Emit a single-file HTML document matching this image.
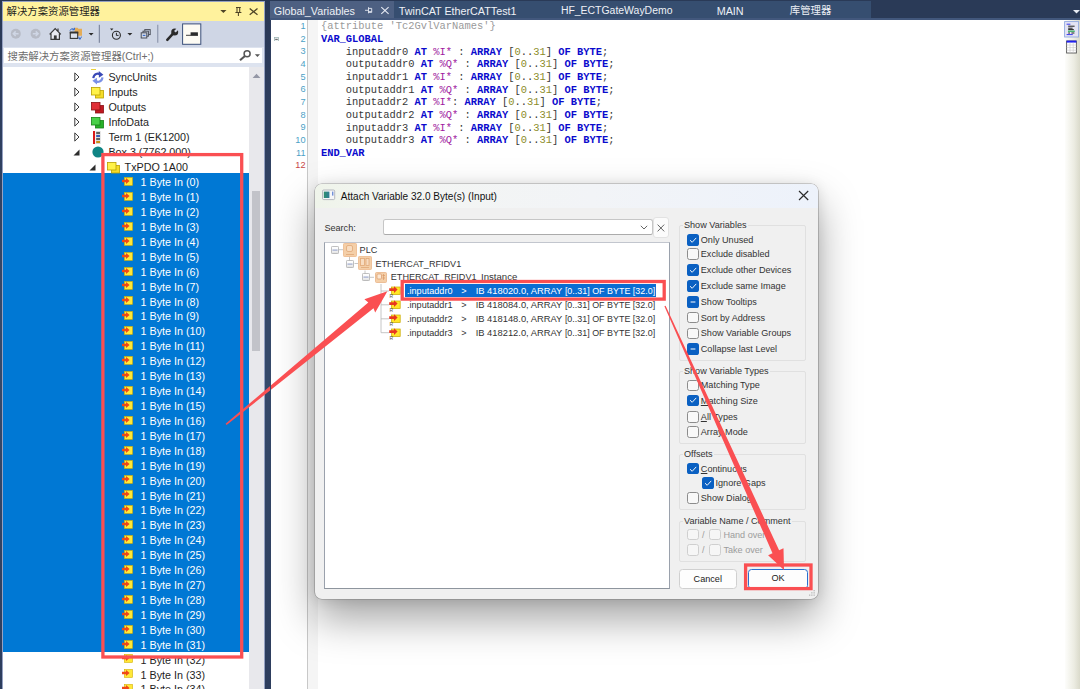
<!DOCTYPE html>
<html lang="zh"><head><meta charset="utf-8"><title>TwinCAT Attach Variable</title>
<style>
html,body{margin:0;padding:0}
body{width:1080px;height:689px;overflow:hidden;position:relative;background:linear-gradient(180deg,#283754 0%,#2C3B5B 10%,#35496A 45%,#35496A 55%,#2D3D5D 100%);font-family:"Liberation Sans","Noto Sans CJK SC",sans-serif;}
.abs{position:absolute}
#left{position:absolute;left:3px;top:2px;width:260.6px;height:687px;background:#fff;overflow:hidden}
#ltitle{position:absolute;left:0;top:0;width:262px;height:19px;background:#FFF29D}
#ltitle .t{position:absolute;left:3.5px;top:2px;font-size:10.4px;line-height:15px;color:#1E1E1E;white-space:nowrap}
#ltool{position:absolute;left:0;top:19px;width:262px;height:26px;background:#CFD6E5}
#lsearch{position:absolute;left:0;top:45px;width:262px;height:19.8px;background:#DDE3EF}
#lsearch .box{position:absolute;left:1px;top:1px;width:257.6px;height:15.3px;background:#fff}
#lsearch .t{position:absolute;left:4.5px;top:2px;font-size:10.4px;line-height:15px;color:#6D6D6D;white-space:nowrap}
#ltree{position:absolute;left:-3px;top:-2px;width:252px;height:689px;}
#selbg{position:absolute;left:3px;top:173.3px;width:246px;height:478.7px;background:#0078D4}
.tt{position:absolute;font-size:10.75px;line-height:14.9px;height:14.9px;color:#1E1E1E;white-space:nowrap}
.tt.sel{color:#fff}
#lscroll{position:absolute;left:246px;top:64.8px;width:14.6px;height:623px;background:#E8E8EC}
#lscroll .th{position:absolute;left:3px;top:124.2px;width:8px;height:160px;background:#C2C3C9}
#edge{position:absolute;left:270px;top:20px;width:0.7px;height:669px;background:linear-gradient(180deg,#2D3C5C 0%,#35496A 43%,#35496A 53%,#2D3D5D 100%);z-index:3}
#tabs{position:absolute;left:270px;top:0;width:810px;height:20px;background:#2A3A57}
#tabs .strip{position:absolute;left:0;top:0.8px;width:601px;height:17.7px;background:#364E70}
#tabs .act{position:absolute;left:0;top:0.8px;width:124px;height:19.2px;background:#4D6082}
#tabs .line{position:absolute;left:0;top:18.3px;width:810px;height:1.7px;background:#42577C}
#tabs .tx{position:absolute;top:3.7px;font-size:10.75px;line-height:14px;color:#EEF1F6;white-space:nowrap}
#ed{position:absolute;left:270px;top:20px;width:810px;height:669px;background:#fff;overflow:hidden}
#gut{position:absolute;left:37px;top:0;width:9.6px;height:669px;background:#F5F5F5;border-left:1px solid #C8C8C8}
#rstrip{position:absolute;left:794.5px;top:0;width:15.5px;height:669px;background:linear-gradient(90deg,#FDFDFB 0%,#ECECE2 60%,#DADACB 100%)}
.ln{position:absolute;left:270px;width:35.5px;text-align:right;font-size:9.2px;line-height:12.66px;margin-top:-0.5px;color:#4C9FC6;font-family:"Liberation Sans",sans-serif}
.ln.red{color:#C84646}
.cl{position:absolute;left:320.9px;margin:0;font-family:"Liberation Mono",monospace;font-size:10.42px;line-height:12.66px;color:#383838;white-space:pre}
.cl .k{color:#0A0ACD;font-weight:bold}
.cl .g{color:#9A9A9A}
.cl .p{color:#A01CA0}
.cl .n{color:#8C8C28}
#dlg{position:absolute;left:315px;top:184px;width:503px;height:414.5px;background:#F0F0F0;border-radius:7px;box-shadow:0 0 0 0.6px rgba(90,90,90,.5),0 20px 42px rgba(0,0,0,.36),0 1px 13px rgba(0,0,0,.11)}
#dtitle{position:absolute;left:0;top:0;width:503px;height:24px;border-radius:7px 7px 0 0;background:linear-gradient(90deg,#EFF4EA 0%,#F3F5F2 15%,#F2F4F7 55%,#EDF2FB 100%)}
#dlgc{position:absolute;left:-315px;top:-184px;width:1080px;height:689px;font-family:"Liberation Sans",sans-serif}
.dl{position:absolute;font-size:9.1px;line-height:12px;color:#333;white-space:nowrap}
.dl.gray{color:#9C9C9C}
.gl{position:absolute;font-size:9.1px;line-height:12px;color:#333;white-space:nowrap;background:#F0F0F0;padding:0 1.5px}
.grp{position:absolute;border:0.8px solid #E0E0E0;box-sizing:border-box;border-radius:2px}
.cb{position:absolute;width:11.6px;height:11.6px;box-sizing:border-box;border:0.85px solid #8C8C8C;border-radius:2.6px;background:#F8F8F8;line-height:0;overflow:hidden}
.cb.on{border:0;background:#0A60C2}
.cb.on svg{position:absolute;left:-0.2px;top:-0.2px}
.cb.dis{border-color:#CFCFCF;background:#F6F6F6}
.dtx{position:absolute;font-size:9.1px;line-height:12px;color:#333;white-space:nowrap}
.dtx.w{color:#fff}
.btn{position:absolute;box-sizing:border-box;height:20px;border-radius:3.5px;background:#FDFDFD;border:0.8px solid #D0D0D0;font-size:9.1px;line-height:18.6px;text-align:center;color:#1a1a1a}
</style></head><body>

<div class="abs" style="left:1.9px;top:1px;width:263.1px;height:688px;background:#95A1C2"></div>
<div id="left">
  <div id="ltitle"><span class="t">解决方案资源管理器</span>
    <svg class="abs" style="left:217px;top:0" width="44" height="19" viewBox="220 2 44 19"><path d="M220.3 9.9 H226.5 L223.4 13 Z" fill="#4E4426"/><path d="M236 7.4 H240.8 M237 7.4 V12.4 M239.7 7.4 V12.4 M235.4 12.5 H241.4 M238.4 12.5 V16" stroke="#4E4426" stroke-width="1.05" fill="none"/><path d="M249.7 8.5 L257.5 14.8 M257.5 8.5 L249.7 14.8" stroke="#4E4426" stroke-width="1.3" fill="none"/></svg>
  </div>
  <div id="ltool">
    <svg class="abs" style="left:-3px;top:0" width="264" height="26" viewBox="0 21 264 26">
      <circle cx="15.8" cy="33.7" r="5" fill="#B7BBC6"/><circle cx="35.6" cy="33.7" r="5" fill="#B7BBC6"/>
      <path d="M18.6 33.7 H13.6 M15.7 31.4 L13.3 33.7 L15.7 36" stroke="#CFD6E5" stroke-width="1.5" fill="none"/>
      <path d="M32.8 33.7 H37.8 M35.7 31.4 L38.1 33.7 L35.7 36" stroke="#CFD6E5" stroke-width="1.5" fill="none"/>
      <path d="M51 33.6 L55.2 29.4 L59.4 33.6 V39.4 H51 Z" fill="#E9EAF1"/><path d="M49.6 34.4 L55.2 28.6 L60.8 34.4 M51 33.4 V39.4 H59.4 V33.4 M58 28.4 V31.2" stroke="#3A3A3A" stroke-width="1.2" fill="none"/><rect x="53.9" y="35.4" width="2.8" height="4" fill="#3A3A3A"/>
      <path d="M74.6 27.8 H77.6 L78.4 28.8 H82 V35.8 H74.6 Z" fill="#E4AC58"/><rect x="70.3" y="32.4" width="7.4" height="6" fill="#DCE2EE" stroke="#333" stroke-width="1.1"/><rect x="69.8" y="31.6" width="8.4" height="1.9" fill="#333"/>
      <path d="M70 30.6 C70.5 28.6 73 28.4 74 29.4 M74.4 27.8 V29.8 H72.4" stroke="#2A62C8" stroke-width="1" fill="none"/><path d="M81.4 36.6 C81 38.6 79.6 39 79 38.6 M79 36.8 V38.8 H81" stroke="#2A62C8" stroke-width="1" fill="none"/>
      <path d="M88.6 33 H93.6 L91.1 35.6 Z" fill="#2B2B2B"/>
      <path d="M99.3 24.8 V42.8" stroke="#6E7891" stroke-width="1"/>
      <path d="M110 28.4 H113.4 L111.7 30.4 Z" fill="#2B2B2B"/><circle cx="116.4" cy="35.2" r="4" fill="none" stroke="#2B2B2B" stroke-width="1.1"/><path d="M116.4 32.8 V35.4 H118.6" stroke="#2B2B2B" stroke-width="1" fill="none"/>
      <path d="M127.4 33 H132.4 L129.9 35.6 Z" fill="#2B2B2B"/>
      <g fill="#CFD6E5" stroke="#4A4F5A" stroke-width="1"><rect x="144.8" y="29.6" width="5.4" height="5"/><rect x="143" y="31.2" width="5.4" height="5"/><rect x="141.2" y="32.8" width="5.6" height="5.2"/></g><path d="M142.8 35.4 H145.4" stroke="#2A62C8" stroke-width="1"/>
      <path d="M157.7 24.8 V42.8" stroke="#98A1B6" stroke-width="1.4"/>
      <path d="M167.3 39.9 L173 33.6" stroke="#2B2B2B" stroke-width="2.5" stroke-linecap="round" fill="none"/><circle cx="174.7" cy="31.9" r="3.5" fill="#2B2B2B"/><path d="M174.9 31.7 L178.6 28 " stroke="#CFD6E5" stroke-width="2.3" fill="none"/>
      <rect x="182.6" y="23.9" width="18.2" height="20.4" fill="#FDFBF3" stroke="#3A4F7A" stroke-width="1"/><path d="M186 35.3 H198" stroke="#2B2B2B" stroke-width="0.9"/><rect x="190.6" y="32.3" width="7.3" height="3.2" fill="#2B2B2B"/>
    </svg>
  </div>
  <div id="lsearch"><div class="box"></div><span class="t">搜索解决方案资源管理器(Ctrl+;)</span>
    <svg class="abs" style="left:236px;top:2px" width="24" height="14" viewBox="239 49 24 14"><circle cx="247.1" cy="53.7" r="3" fill="none" stroke="#555" stroke-width="1.5"/><path d="M245 56 L240 60.2" stroke="#555" stroke-width="2.1"/><path d="M254.9 54.2 H260 L257.45 57 Z" fill="#555"/></svg>
  </div>
  <div id="ltree">
    <div id="selbg"></div>
    <div class="abs" style="left:90.5px;top:68.8px;width:5.5px;height:1px;background:#E8D040"></div>
<svg class="abs" style="left:74px;top:71.6px" width="6" height="10" viewBox="0 0 6 10"><path d="M0.8 0.9 L5 5 L0.8 9.1 Z" fill="#fff" stroke="#3C3C3C" stroke-width="1"/></svg><span class="abs" style="left:91px;top:70.2px;line-height:0"><svg width="13" height="15" viewBox="0 0 13 15"><path d="M2.3 8.2 C2.8 3.8 7 2.6 9.2 4.6" fill="none" stroke="#3A49B6" stroke-width="2.1"/><path d="M7.8 1 L12.4 4.7 L7.9 7.8 Z" fill="#3A49B6"/><path d="M11.5 7.3 C11 11.7 6.8 12.9 4.6 10.9" fill="none" stroke="#7A90E6" stroke-width="2.1"/><path d="M6 14.5 L1.4 10.8 L5.9 7.7 Z" fill="#7A90E6"/></svg></span><span class="tt" style="left:108.4px;top:70.2px">SyncUnits</span>
<svg class="abs" style="left:74px;top:86.6px" width="6" height="10" viewBox="0 0 6 10"><path d="M0.8 0.9 L5 5 L0.8 9.1 Z" fill="#fff" stroke="#3C3C3C" stroke-width="1"/></svg><span class="abs" style="left:91px;top:87.0px;line-height:0"><svg width="13" height="12" viewBox="0 0 13 12"><rect x="4.5" y="3.5" width="8" height="7.5" fill="#F5DC28" stroke="#B9A000" stroke-width="0.8"/><rect x="0.5" y="0.5" width="8.5" height="7.5" fill="#FFF24A" stroke="#B9A000" stroke-width="0.8"/></svg></span><span class="tt" style="left:108.4px;top:85.2px">Inputs</span>
<svg class="abs" style="left:74px;top:101.6px" width="6" height="10" viewBox="0 0 6 10"><path d="M0.8 0.9 L5 5 L0.8 9.1 Z" fill="#fff" stroke="#3C3C3C" stroke-width="1"/></svg><span class="abs" style="left:91px;top:102.0px;line-height:0"><svg width="13" height="12" viewBox="0 0 13 12"><rect x="4.5" y="3.5" width="8" height="7.5" fill="#C01820" stroke="#8A1016" stroke-width="0.8"/><rect x="0.5" y="0.5" width="8.5" height="7.5" fill="#E03038" stroke="#8A1016" stroke-width="0.8"/></svg></span><span class="tt" style="left:108.4px;top:100.2px">Outputs</span>
<svg class="abs" style="left:74px;top:116.6px" width="6" height="10" viewBox="0 0 6 10"><path d="M0.8 0.9 L5 5 L0.8 9.1 Z" fill="#fff" stroke="#3C3C3C" stroke-width="1"/></svg><span class="abs" style="left:91px;top:117.0px;line-height:0"><svg width="13" height="12" viewBox="0 0 13 12"><rect x="4.5" y="3.5" width="8" height="7.5" fill="#28B028" stroke="#168016" stroke-width="0.8"/><rect x="0.5" y="0.5" width="8.5" height="7.5" fill="#48D048" stroke="#168016" stroke-width="0.8"/></svg></span><span class="tt" style="left:108.4px;top:115.2px">InfoData</span>
<svg class="abs" style="left:74px;top:131.6px" width="6" height="10" viewBox="0 0 6 10"><path d="M0.8 0.9 L5 5 L0.8 9.1 Z" fill="#fff" stroke="#3C3C3C" stroke-width="1"/></svg><span class="abs" style="left:93px;top:130.5px;line-height:0"><svg width="8" height="13" viewBox="0 0 8 13"><rect x="0" y="0" width="2" height="13" fill="#D81818"/><rect x="2.6" y="0" width="5" height="13" fill="#D8D8D8"/><rect x="3.2" y="1" width="3.8" height="2" fill="#606060"/><rect x="3.2" y="4" width="3.8" height="2" fill="#3858B8"/><rect x="3.2" y="7" width="3.8" height="2" fill="#606060"/><rect x="3.2" y="10" width="3.8" height="2" fill="#C89018"/></svg></span><span class="tt" style="left:108.4px;top:130.2px">Term 1 (EK1200)</span>
<svg class="abs" style="left:73px;top:149.0px" width="7" height="7" viewBox="0 0 7 7"><path d="M6.5 0.5 V6.5 H0.5 Z" fill="#2D2D2D"/></svg><span class="abs" style="left:92px;top:146.0px;line-height:0"><svg width="12" height="12" viewBox="0 0 12 12"><circle cx="6" cy="6" r="5.6" fill="#0F8484"/></svg></span><span class="tt" style="left:108.4px;top:145.2px">Box 3 (7762.000)</span>
<svg class="abs" style="left:88.8px;top:164.0px" width="7" height="7" viewBox="0 0 7 7"><path d="M6.5 0.5 V6.5 H0.5 Z" fill="#2D2D2D"/></svg><span class="abs" style="left:107px;top:161.9px;line-height:0"><svg width="13" height="12" viewBox="0 0 13 12"><rect x="4.5" y="3.5" width="8" height="7.5" fill="#F5DC28" stroke="#B9A000" stroke-width="0.8"/><rect x="0.5" y="0.5" width="8.5" height="7.5" fill="#FFF24A" stroke="#B9A000" stroke-width="0.8"/></svg></span><span class="tt" style="left:124.6px;top:160.2px">TxPDO 1A00</span>
<span class="abs" style="left:122.1px;top:177.0px;line-height:0"><svg width="11" height="9" viewBox="0 0 11 9"><rect x="2.4" y="0.5" width="8.1" height="7.9" fill="#FFE838" stroke="#D4B000" stroke-width="0.6"/><path d="M0 2.8 H4 V0.9 L7.6 4 L4 7.1 V5.2 H0 Z" fill="#F04818"/></svg></span><span class="tt sel" style="left:140.6px;top:175.2px">1 Byte In (0)</span>
<span class="abs" style="left:122.1px;top:191.92px;line-height:0"><svg width="11" height="9" viewBox="0 0 11 9"><rect x="2.4" y="0.5" width="8.1" height="7.9" fill="#FFE838" stroke="#D4B000" stroke-width="0.6"/><path d="M0 2.8 H4 V0.9 L7.6 4 L4 7.1 V5.2 H0 Z" fill="#F04818"/></svg></span><span class="tt sel" style="left:140.6px;top:190.12px">1 Byte In (1)</span>
<span class="abs" style="left:122.1px;top:206.84px;line-height:0"><svg width="11" height="9" viewBox="0 0 11 9"><rect x="2.4" y="0.5" width="8.1" height="7.9" fill="#FFE838" stroke="#D4B000" stroke-width="0.6"/><path d="M0 2.8 H4 V0.9 L7.6 4 L4 7.1 V5.2 H0 Z" fill="#F04818"/></svg></span><span class="tt sel" style="left:140.6px;top:205.04px">1 Byte In (2)</span>
<span class="abs" style="left:122.1px;top:221.76px;line-height:0"><svg width="11" height="9" viewBox="0 0 11 9"><rect x="2.4" y="0.5" width="8.1" height="7.9" fill="#FFE838" stroke="#D4B000" stroke-width="0.6"/><path d="M0 2.8 H4 V0.9 L7.6 4 L4 7.1 V5.2 H0 Z" fill="#F04818"/></svg></span><span class="tt sel" style="left:140.6px;top:219.96px">1 Byte In (3)</span>
<span class="abs" style="left:122.1px;top:236.68px;line-height:0"><svg width="11" height="9" viewBox="0 0 11 9"><rect x="2.4" y="0.5" width="8.1" height="7.9" fill="#FFE838" stroke="#D4B000" stroke-width="0.6"/><path d="M0 2.8 H4 V0.9 L7.6 4 L4 7.1 V5.2 H0 Z" fill="#F04818"/></svg></span><span class="tt sel" style="left:140.6px;top:234.88px">1 Byte In (4)</span>
<span class="abs" style="left:122.1px;top:251.6px;line-height:0"><svg width="11" height="9" viewBox="0 0 11 9"><rect x="2.4" y="0.5" width="8.1" height="7.9" fill="#FFE838" stroke="#D4B000" stroke-width="0.6"/><path d="M0 2.8 H4 V0.9 L7.6 4 L4 7.1 V5.2 H0 Z" fill="#F04818"/></svg></span><span class="tt sel" style="left:140.6px;top:249.8px">1 Byte In (5)</span>
<span class="abs" style="left:122.1px;top:266.52px;line-height:0"><svg width="11" height="9" viewBox="0 0 11 9"><rect x="2.4" y="0.5" width="8.1" height="7.9" fill="#FFE838" stroke="#D4B000" stroke-width="0.6"/><path d="M0 2.8 H4 V0.9 L7.6 4 L4 7.1 V5.2 H0 Z" fill="#F04818"/></svg></span><span class="tt sel" style="left:140.6px;top:264.72px">1 Byte In (6)</span>
<span class="abs" style="left:122.1px;top:281.44px;line-height:0"><svg width="11" height="9" viewBox="0 0 11 9"><rect x="2.4" y="0.5" width="8.1" height="7.9" fill="#FFE838" stroke="#D4B000" stroke-width="0.6"/><path d="M0 2.8 H4 V0.9 L7.6 4 L4 7.1 V5.2 H0 Z" fill="#F04818"/></svg></span><span class="tt sel" style="left:140.6px;top:279.64px">1 Byte In (7)</span>
<span class="abs" style="left:122.1px;top:296.36px;line-height:0"><svg width="11" height="9" viewBox="0 0 11 9"><rect x="2.4" y="0.5" width="8.1" height="7.9" fill="#FFE838" stroke="#D4B000" stroke-width="0.6"/><path d="M0 2.8 H4 V0.9 L7.6 4 L4 7.1 V5.2 H0 Z" fill="#F04818"/></svg></span><span class="tt sel" style="left:140.6px;top:294.56px">1 Byte In (8)</span>
<span class="abs" style="left:122.1px;top:311.28px;line-height:0"><svg width="11" height="9" viewBox="0 0 11 9"><rect x="2.4" y="0.5" width="8.1" height="7.9" fill="#FFE838" stroke="#D4B000" stroke-width="0.6"/><path d="M0 2.8 H4 V0.9 L7.6 4 L4 7.1 V5.2 H0 Z" fill="#F04818"/></svg></span><span class="tt sel" style="left:140.6px;top:309.48px">1 Byte In (9)</span>
<span class="abs" style="left:122.1px;top:326.2px;line-height:0"><svg width="11" height="9" viewBox="0 0 11 9"><rect x="2.4" y="0.5" width="8.1" height="7.9" fill="#FFE838" stroke="#D4B000" stroke-width="0.6"/><path d="M0 2.8 H4 V0.9 L7.6 4 L4 7.1 V5.2 H0 Z" fill="#F04818"/></svg></span><span class="tt sel" style="left:140.6px;top:324.4px">1 Byte In (10)</span>
<span class="abs" style="left:122.1px;top:341.12px;line-height:0"><svg width="11" height="9" viewBox="0 0 11 9"><rect x="2.4" y="0.5" width="8.1" height="7.9" fill="#FFE838" stroke="#D4B000" stroke-width="0.6"/><path d="M0 2.8 H4 V0.9 L7.6 4 L4 7.1 V5.2 H0 Z" fill="#F04818"/></svg></span><span class="tt sel" style="left:140.6px;top:339.32px">1 Byte In (11)</span>
<span class="abs" style="left:122.1px;top:356.04px;line-height:0"><svg width="11" height="9" viewBox="0 0 11 9"><rect x="2.4" y="0.5" width="8.1" height="7.9" fill="#FFE838" stroke="#D4B000" stroke-width="0.6"/><path d="M0 2.8 H4 V0.9 L7.6 4 L4 7.1 V5.2 H0 Z" fill="#F04818"/></svg></span><span class="tt sel" style="left:140.6px;top:354.24px">1 Byte In (12)</span>
<span class="abs" style="left:122.1px;top:370.96px;line-height:0"><svg width="11" height="9" viewBox="0 0 11 9"><rect x="2.4" y="0.5" width="8.1" height="7.9" fill="#FFE838" stroke="#D4B000" stroke-width="0.6"/><path d="M0 2.8 H4 V0.9 L7.6 4 L4 7.1 V5.2 H0 Z" fill="#F04818"/></svg></span><span class="tt sel" style="left:140.6px;top:369.16px">1 Byte In (13)</span>
<span class="abs" style="left:122.1px;top:385.88px;line-height:0"><svg width="11" height="9" viewBox="0 0 11 9"><rect x="2.4" y="0.5" width="8.1" height="7.9" fill="#FFE838" stroke="#D4B000" stroke-width="0.6"/><path d="M0 2.8 H4 V0.9 L7.6 4 L4 7.1 V5.2 H0 Z" fill="#F04818"/></svg></span><span class="tt sel" style="left:140.6px;top:384.08px">1 Byte In (14)</span>
<span class="abs" style="left:122.1px;top:400.8px;line-height:0"><svg width="11" height="9" viewBox="0 0 11 9"><rect x="2.4" y="0.5" width="8.1" height="7.9" fill="#FFE838" stroke="#D4B000" stroke-width="0.6"/><path d="M0 2.8 H4 V0.9 L7.6 4 L4 7.1 V5.2 H0 Z" fill="#F04818"/></svg></span><span class="tt sel" style="left:140.6px;top:399.0px">1 Byte In (15)</span>
<span class="abs" style="left:122.1px;top:415.72px;line-height:0"><svg width="11" height="9" viewBox="0 0 11 9"><rect x="2.4" y="0.5" width="8.1" height="7.9" fill="#FFE838" stroke="#D4B000" stroke-width="0.6"/><path d="M0 2.8 H4 V0.9 L7.6 4 L4 7.1 V5.2 H0 Z" fill="#F04818"/></svg></span><span class="tt sel" style="left:140.6px;top:413.92px">1 Byte In (16)</span>
<span class="abs" style="left:122.1px;top:430.64px;line-height:0"><svg width="11" height="9" viewBox="0 0 11 9"><rect x="2.4" y="0.5" width="8.1" height="7.9" fill="#FFE838" stroke="#D4B000" stroke-width="0.6"/><path d="M0 2.8 H4 V0.9 L7.6 4 L4 7.1 V5.2 H0 Z" fill="#F04818"/></svg></span><span class="tt sel" style="left:140.6px;top:428.84px">1 Byte In (17)</span>
<span class="abs" style="left:122.1px;top:445.56px;line-height:0"><svg width="11" height="9" viewBox="0 0 11 9"><rect x="2.4" y="0.5" width="8.1" height="7.9" fill="#FFE838" stroke="#D4B000" stroke-width="0.6"/><path d="M0 2.8 H4 V0.9 L7.6 4 L4 7.1 V5.2 H0 Z" fill="#F04818"/></svg></span><span class="tt sel" style="left:140.6px;top:443.76px">1 Byte In (18)</span>
<span class="abs" style="left:122.1px;top:460.48px;line-height:0"><svg width="11" height="9" viewBox="0 0 11 9"><rect x="2.4" y="0.5" width="8.1" height="7.9" fill="#FFE838" stroke="#D4B000" stroke-width="0.6"/><path d="M0 2.8 H4 V0.9 L7.6 4 L4 7.1 V5.2 H0 Z" fill="#F04818"/></svg></span><span class="tt sel" style="left:140.6px;top:458.68px">1 Byte In (19)</span>
<span class="abs" style="left:122.1px;top:475.4px;line-height:0"><svg width="11" height="9" viewBox="0 0 11 9"><rect x="2.4" y="0.5" width="8.1" height="7.9" fill="#FFE838" stroke="#D4B000" stroke-width="0.6"/><path d="M0 2.8 H4 V0.9 L7.6 4 L4 7.1 V5.2 H0 Z" fill="#F04818"/></svg></span><span class="tt sel" style="left:140.6px;top:473.6px">1 Byte In (20)</span>
<span class="abs" style="left:122.1px;top:490.32px;line-height:0"><svg width="11" height="9" viewBox="0 0 11 9"><rect x="2.4" y="0.5" width="8.1" height="7.9" fill="#FFE838" stroke="#D4B000" stroke-width="0.6"/><path d="M0 2.8 H4 V0.9 L7.6 4 L4 7.1 V5.2 H0 Z" fill="#F04818"/></svg></span><span class="tt sel" style="left:140.6px;top:488.52px">1 Byte In (21)</span>
<span class="abs" style="left:122.1px;top:505.24px;line-height:0"><svg width="11" height="9" viewBox="0 0 11 9"><rect x="2.4" y="0.5" width="8.1" height="7.9" fill="#FFE838" stroke="#D4B000" stroke-width="0.6"/><path d="M0 2.8 H4 V0.9 L7.6 4 L4 7.1 V5.2 H0 Z" fill="#F04818"/></svg></span><span class="tt sel" style="left:140.6px;top:503.44px">1 Byte In (22)</span>
<span class="abs" style="left:122.1px;top:520.16px;line-height:0"><svg width="11" height="9" viewBox="0 0 11 9"><rect x="2.4" y="0.5" width="8.1" height="7.9" fill="#FFE838" stroke="#D4B000" stroke-width="0.6"/><path d="M0 2.8 H4 V0.9 L7.6 4 L4 7.1 V5.2 H0 Z" fill="#F04818"/></svg></span><span class="tt sel" style="left:140.6px;top:518.36px">1 Byte In (23)</span>
<span class="abs" style="left:122.1px;top:535.08px;line-height:0"><svg width="11" height="9" viewBox="0 0 11 9"><rect x="2.4" y="0.5" width="8.1" height="7.9" fill="#FFE838" stroke="#D4B000" stroke-width="0.6"/><path d="M0 2.8 H4 V0.9 L7.6 4 L4 7.1 V5.2 H0 Z" fill="#F04818"/></svg></span><span class="tt sel" style="left:140.6px;top:533.28px">1 Byte In (24)</span>
<span class="abs" style="left:122.1px;top:550.0px;line-height:0"><svg width="11" height="9" viewBox="0 0 11 9"><rect x="2.4" y="0.5" width="8.1" height="7.9" fill="#FFE838" stroke="#D4B000" stroke-width="0.6"/><path d="M0 2.8 H4 V0.9 L7.6 4 L4 7.1 V5.2 H0 Z" fill="#F04818"/></svg></span><span class="tt sel" style="left:140.6px;top:548.2px">1 Byte In (25)</span>
<span class="abs" style="left:122.1px;top:564.92px;line-height:0"><svg width="11" height="9" viewBox="0 0 11 9"><rect x="2.4" y="0.5" width="8.1" height="7.9" fill="#FFE838" stroke="#D4B000" stroke-width="0.6"/><path d="M0 2.8 H4 V0.9 L7.6 4 L4 7.1 V5.2 H0 Z" fill="#F04818"/></svg></span><span class="tt sel" style="left:140.6px;top:563.12px">1 Byte In (26)</span>
<span class="abs" style="left:122.1px;top:579.84px;line-height:0"><svg width="11" height="9" viewBox="0 0 11 9"><rect x="2.4" y="0.5" width="8.1" height="7.9" fill="#FFE838" stroke="#D4B000" stroke-width="0.6"/><path d="M0 2.8 H4 V0.9 L7.6 4 L4 7.1 V5.2 H0 Z" fill="#F04818"/></svg></span><span class="tt sel" style="left:140.6px;top:578.04px">1 Byte In (27)</span>
<span class="abs" style="left:122.1px;top:594.76px;line-height:0"><svg width="11" height="9" viewBox="0 0 11 9"><rect x="2.4" y="0.5" width="8.1" height="7.9" fill="#FFE838" stroke="#D4B000" stroke-width="0.6"/><path d="M0 2.8 H4 V0.9 L7.6 4 L4 7.1 V5.2 H0 Z" fill="#F04818"/></svg></span><span class="tt sel" style="left:140.6px;top:592.96px">1 Byte In (28)</span>
<span class="abs" style="left:122.1px;top:609.68px;line-height:0"><svg width="11" height="9" viewBox="0 0 11 9"><rect x="2.4" y="0.5" width="8.1" height="7.9" fill="#FFE838" stroke="#D4B000" stroke-width="0.6"/><path d="M0 2.8 H4 V0.9 L7.6 4 L4 7.1 V5.2 H0 Z" fill="#F04818"/></svg></span><span class="tt sel" style="left:140.6px;top:607.88px">1 Byte In (29)</span>
<span class="abs" style="left:122.1px;top:624.6px;line-height:0"><svg width="11" height="9" viewBox="0 0 11 9"><rect x="2.4" y="0.5" width="8.1" height="7.9" fill="#FFE838" stroke="#D4B000" stroke-width="0.6"/><path d="M0 2.8 H4 V0.9 L7.6 4 L4 7.1 V5.2 H0 Z" fill="#F04818"/></svg></span><span class="tt sel" style="left:140.6px;top:622.8px">1 Byte In (30)</span>
<span class="abs" style="left:122.1px;top:639.52px;line-height:0"><svg width="11" height="9" viewBox="0 0 11 9"><rect x="2.4" y="0.5" width="8.1" height="7.9" fill="#FFE838" stroke="#D4B000" stroke-width="0.6"/><path d="M0 2.8 H4 V0.9 L7.6 4 L4 7.1 V5.2 H0 Z" fill="#F04818"/></svg></span><span class="tt sel" style="left:140.6px;top:637.72px">1 Byte In (31)</span>
<span class="abs" style="left:122.1px;top:654.44px;line-height:0"><svg width="11" height="9" viewBox="0 0 11 9"><rect x="2.4" y="0.5" width="8.1" height="7.9" fill="#FFE838" stroke="#D4B000" stroke-width="0.6"/><path d="M0 2.8 H4 V0.9 L7.6 4 L4 7.1 V5.2 H0 Z" fill="#F04818"/></svg></span><span class="tt" style="left:140.6px;top:652.64px">1 Byte In (32)</span>
<span class="abs" style="left:122.1px;top:669.36px;line-height:0"><svg width="11" height="9" viewBox="0 0 11 9"><rect x="2.4" y="0.5" width="8.1" height="7.9" fill="#FFE838" stroke="#D4B000" stroke-width="0.6"/><path d="M0 2.8 H4 V0.9 L7.6 4 L4 7.1 V5.2 H0 Z" fill="#F04818"/></svg></span><span class="tt" style="left:140.6px;top:667.56px">1 Byte In (33)</span>
<span class="abs" style="left:122.1px;top:684.28px;line-height:0"><svg width="11" height="9" viewBox="0 0 11 9"><rect x="2.4" y="0.5" width="8.1" height="7.9" fill="#FFE838" stroke="#D4B000" stroke-width="0.6"/><path d="M0 2.8 H4 V0.9 L7.6 4 L4 7.1 V5.2 H0 Z" fill="#F04818"/></svg></span><span class="tt" style="left:140.6px;top:682.48px">1 Byte In (34)</span>
  </div>
  <div id="lscroll"><div class="th"></div>
    <svg class="abs" style="left:3px;top:6.5px" width="9" height="6" viewBox="0 0 9 6"><path d="M0.6 5 L4.5 0.8 L8.4 5 Z" fill="#9497A6"/></svg>
  </div>
</div>
<div id="edge"></div>

<div id="tabs">
  <div class="strip"></div><div class="act"></div><div class="line"></div>
  <span class="tx" style="left:3.8px">Global_Variables</span>
  <svg class="abs" style="left:92px;top:4px" width="28" height="13" viewBox="362 4 28 13"><path d="M365 10.3 H368.4 M368.5 7.2 V13.3 M368.5 8.4 H371.7 V12.4 H368.5 M368.5 11.6 H371.7" stroke="#E4E8F0" stroke-width="0.9" fill="none"/><path d="M381.3 7.2 L388.6 13.8 M388.6 7.2 L381.3 13.8" stroke="#E8ECF4" stroke-width="1.1" fill="none"/></svg>
  <span class="tx" style="left:128.8px">TwinCAT EtherCATTest1</span>
  <span class="tx" style="left:290.9px;font-size:10.45px">HF_ECTGateWayDemo</span>
  <span class="tx" style="left:446.7px">MAIN</span>
  <span class="tx" style="left:519.8px;font-size:10.4px">库管理器</span>
  <svg class="abs" style="left:803px;top:9.5px" width="7" height="4" viewBox="0 0 7 4"><path d="M0 0 H7 L3.5 3.6 Z" fill="#E8ECF4"/></svg>
</div>

<div id="ed">
  <div id="gut"></div>
  <div id="rstrip"></div>
  <svg class="abs" style="left:4.1px;top:16.8px" width="5" height="4.6" viewBox="0 0 5 4.6"><rect x="0.4" y="0.4" width="4.2" height="3.8" fill="#fff" stroke="#9DB5B5" stroke-width="0.8"/><path d="M1.2 2.3 H3.8" stroke="#333" stroke-width="0.9"/></svg>
  <svg class="abs" style="left:794px;top:0.5px" width="16" height="34" viewBox="0 0 16 34">
    <rect x="0.6" y="0.6" width="14" height="15.4" fill="#E4E4F4" stroke="#90A8E0" stroke-width="0.9"/>
    <path d="M2.6 3.2 H6.4 M2.6 13.6 H8.8" stroke="#3838F0" stroke-width="1"/><path d="M4.2 5.2 H10.6 M4.2 7.2 H8.6 M4.2 8.6 H9.8 M4.2 12 H6 M7.4 12 H10.4" stroke="#202020" stroke-width="1"/><path d="M4 10.2 H10.8" stroke="#18A848" stroke-width="1.1"/>
    <rect x="2.6" y="20" width="9.8" height="12" fill="#fff" stroke="#555" stroke-width="0.9"/><rect x="2.6" y="19.6" width="9.8" height="2" fill="#2020F0"/><path d="M2.6 24 H12.4 M2.6 26.6 H12.4 M2.6 29.2 H12.4 M6 21.6 V32 M9.2 21.6 V32" stroke="#C8C8C8" stroke-width="0.6"/>
  </svg>
</div>
<span class="ln" style="top:20.47px">1</span><pre class="cl" style="top:20.47px"><span class="g">{attribute 'Tc2GvlVarNames'}</span></pre>
<span class="ln" style="top:33.13px">2</span><pre class="cl" style="top:33.13px"><b class="k">VAR_GLOBAL</b></pre>
<span class="ln" style="top:45.79px">3</span><pre class="cl" style="top:45.79px">    inputaddr0 <b class="k">AT</b> <span class="p">%I*</span> : <b class="k">ARRAY</b> [<span class="n">0</span>..<span class="n">31</span>] <b class="k">OF</b> <b class="k">BYTE</b>;</pre>
<span class="ln" style="top:58.45px">4</span><pre class="cl" style="top:58.45px">    outputaddr0 <b class="k">AT</b> <span class="p">%Q*</span> : <b class="k">ARRAY</b> [<span class="n">0</span>..<span class="n">31</span>] <b class="k">OF</b> <b class="k">BYTE</b>;</pre>
<span class="ln" style="top:71.11px">5</span><pre class="cl" style="top:71.11px">    inputaddr1 <b class="k">AT</b> <span class="p">%I*</span> : <b class="k">ARRAY</b> [<span class="n">0</span>..<span class="n">31</span>] <b class="k">OF</b> <b class="k">BYTE</b>;</pre>
<span class="ln" style="top:83.77px">6</span><pre class="cl" style="top:83.77px">    outputaddr1 <b class="k">AT</b> <span class="p">%Q*</span> : <b class="k">ARRAY</b> [<span class="n">0</span>..<span class="n">31</span>] <b class="k">OF</b> <b class="k">BYTE</b>;</pre>
<span class="ln" style="top:96.43px">7</span><pre class="cl" style="top:96.43px">    inputaddr2 <b class="k">AT</b> <span class="p">%I*</span>: <b class="k">ARRAY</b> [<span class="n">0</span>..<span class="n">31</span>] <b class="k">OF</b> <b class="k">BYTE</b>;</pre>
<span class="ln" style="top:109.09px">8</span><pre class="cl" style="top:109.09px">    outputaddr2 <b class="k">AT</b> <span class="p">%Q*</span> : <b class="k">ARRAY</b> [<span class="n">0</span>..<span class="n">31</span>] <b class="k">OF</b> <b class="k">BYTE</b>;</pre>
<span class="ln" style="top:121.75px">9</span><pre class="cl" style="top:121.75px">    inputaddr3 <b class="k">AT</b> <span class="p">%I*</span> : <b class="k">ARRAY</b> [<span class="n">0</span>..<span class="n">31</span>] <b class="k">OF</b> <b class="k">BYTE</b>;</pre>
<span class="ln" style="top:134.41px">10</span><pre class="cl" style="top:134.41px">    outputaddr3 <b class="k">AT</b> <span class="p">%Q*</span> : <b class="k">ARRAY</b> [<span class="n">0</span>..<span class="n">31</span>] <b class="k">OF</b> <b class="k">BYTE</b>;</pre>
<span class="ln" style="top:147.07px">11</span><pre class="cl" style="top:147.07px"><b class="k">END_VAR</b></pre>
<span class="ln red" style="top:159.73px">12</span><pre class="cl" style="top:159.73px"></pre>


<div id="dlg">
 <div id="dtitle"></div>
 <div id="dlgc">
  <svg class="abs" style="left:322px;top:189px" width="14" height="12" viewBox="0 0 14 12"><rect x="0.5" y="1" width="12.2" height="9.6" rx="1.2" fill="#F6F6F8" stroke="#A6AAB2" stroke-width="0.8"/><rect x="1.8" y="2.6" width="5.6" height="6.4" fill="url(#tg)"/><rect x="10" y="2.6" width="1.4" height="4" fill="#7090D8"/></svg>
  <span class="abs" style="left:340.8px;top:189.5px;font-size:10.05px;line-height:13px;color:#111;white-space:nowrap">Attach Variable 32.0 Byte(s) (Input)</span>
  <svg class="abs" style="left:798px;top:190px" width="11" height="11" viewBox="0 0 11 11"><path d="M1 1 L10.2 10 M10.2 1 L1 10" stroke="#2a2a2a" stroke-width="1.15" fill="none"/></svg>
  <span class="dl" style="left:324.4px;top:221.5px">Search:</span>
  <div class="abs" style="left:383px;top:218.7px;width:269.5px;height:16px;box-sizing:border-box;background:#fff;border:1px solid #C6C6C6;border-bottom-color:#ABABAB;border-radius:2.5px"></div>
  <svg class="abs" style="left:640.3px;top:225px" width="8" height="5" viewBox="0 0 8 5"><path d="M0.8 0.8 L4 4 L7.2 0.8" stroke="#555" stroke-width="0.9" fill="none"/></svg>
  <div class="abs" style="left:653.4px;top:217.3px;width:16px;height:20.4px;box-sizing:border-box;background:#FBFBFB;border:0.8px solid #E2E2E2;border-radius:3px"></div>
  <svg class="abs" style="left:657.4px;top:224.2px" width="8" height="8" viewBox="0 0 8 8"><path d="M0.6 0.6 L7.2 7.4 M7.2 0.6 L0.6 7.4" stroke="#4a4a4a" stroke-width="0.85" fill="none"/></svg>
  <div class="abs" style="left:324px;top:241.8px;width:346px;height:347px;box-sizing:border-box;background:#fff;border:1px solid #9AA1AC;border-top:1.3px solid #C2C6CE;border-bottom-color:#8E959E"></div>
<svg class="abs" style="left:324px;top:242px" width="120" height="110" viewBox="324 242 120 110" fill="none" stroke="#B8B8B8" stroke-width="0.8"><path d="M338.5 249.7 H343 M349.5 256.5 V263.5 M354.5 263.5 H358 M365 270.5 V277.3 M370 277.3 H374 M381 284 V332.7 M381 291 H389 M381 304.8 H389 M381 318.8 H389 M381 332.7 H389"/></svg><svg class="abs" style="left:330.5px;top:245.7px" width="8" height="8" viewBox="0 0 9 9"><rect x="0.5" y="0.5" width="8" height="8" rx="1" fill="url(#eg)" stroke="#ABABAB" stroke-width="0.9"/><path d="M1.6 4.6 H7.4" stroke="#6E80B8" stroke-width="0.9"/></svg><svg class="abs" style="left:342.5px;top:242.5px" width="14" height="14" viewBox="0 0 14 14"><rect x="0.5" y="0.5" width="13" height="13" rx="0.8" fill="#F4CFA8" stroke="#EDB98C" stroke-width="0.8"/><rect x="3.5" y="2.5" width="6" height="6" rx="1.5" fill="#F8DCC0" stroke="#E0A878" stroke-width="0.8"/><path d="M3 11.5 H11" stroke="#E0A878" stroke-width="0.8"/></svg><span class="dtx" style="left:359.6px;top:243.7px">PLC</span>
<svg class="abs" style="left:346px;top:259.5px" width="8" height="8" viewBox="0 0 9 9"><rect x="0.5" y="0.5" width="8" height="8" rx="1" fill="url(#eg)" stroke="#ABABAB" stroke-width="0.9"/><path d="M1.6 4.6 H7.4" stroke="#6E80B8" stroke-width="0.9"/></svg><svg class="abs" style="left:358px;top:256.3px" width="14" height="14" viewBox="0 0 14 14"><rect x="0.5" y="0.5" width="13" height="13" rx="0.8" fill="#F4CFA8" stroke="#EDB98C" stroke-width="0.8"/><rect x="2.5" y="2.5" width="4" height="7" fill="#F8DCC0" stroke="#E0A878" stroke-width="0.8"/><rect x="8" y="2.5" width="3" height="7" fill="#F8DCC0" stroke="#E0A878" stroke-width="0.8"/><path d="M3 11.5 H11" stroke="#E0A878" stroke-width="0.8"/></svg><span class="dtx" style="left:375.5px;top:257.5px">ETHERCAT_RFIDV1</span>
<svg class="abs" style="left:361.5px;top:273.3px" width="8" height="8" viewBox="0 0 9 9"><rect x="0.5" y="0.5" width="8" height="8" rx="1" fill="url(#eg)" stroke="#ABABAB" stroke-width="0.9"/><path d="M1.6 4.6 H7.4" stroke="#6E80B8" stroke-width="0.9"/></svg><svg class="abs" style="left:374.5px;top:271.8px" width="12" height="11" viewBox="0 0 12 11"><rect x="0.5" y="0.5" width="11" height="10" rx="1" fill="#F4CFA8" stroke="#E8B488" stroke-width="0.8"/><rect x="2" y="2" width="4.5" height="5" rx="1" fill="#FBE8D4" stroke="#D89868" stroke-width="0.7"/><path d="M8.5 2 V8 M7.5 3.5 H10 M7.5 6 H10" stroke="#D89868" stroke-width="0.7"/></svg><span class="dtx" style="left:390.8px;top:271.3px">ETHERCAT_RFIDV1</span><span class="dtx" style="left:481px;top:271.3px;font-size:9.6px">Instance</span>
<div class="abs" style="left:404.7px;top:284.4px;width:251.6px;height:12.8px;background:#0A6DD2"></div><svg class="abs" style="left:386.5px;top:285.0px" width="14" height="14" viewBox="0 0 14 14"><rect x="4.6" y="2" width="8.6" height="7.6" fill="#FFE628" stroke="#C8A800" stroke-width="0.7"/><path d="M2.2 3.2 H7 V1.2 L10.6 4.6 L7 8 V6 H2.2 Z" fill="#E83820"/><text x="2.4" y="13" font-family="Liberation Sans" font-size="5" fill="#555">R</text></svg><span class="dtx w" style="left:407px;top:285.0px">.inputaddr0</span><span class="dtx w" style="left:461.3px;top:285.0px">&gt;</span><span class="dtx w" style="left:475.7px;top:285.0px;font-size:9.35px">IB 418020.0, ARRAY</span><span class="dtx w" style="left:564.9px;top:285.0px;font-size:8.93px">[0..31] OF BYTE [32.0]</span>
<svg class="abs" style="left:386.5px;top:298.9px" width="14" height="14" viewBox="0 0 14 14"><rect x="4.6" y="2" width="8.6" height="7.6" fill="#FFE628" stroke="#C8A800" stroke-width="0.7"/><path d="M2.2 3.2 H7 V1.2 L10.6 4.6 L7 8 V6 H2.2 Z" fill="#E83820"/><text x="2.4" y="13" font-family="Liberation Sans" font-size="5" fill="#555">R</text></svg><span class="dtx" style="left:407px;top:298.9px">.inputaddr1</span><span class="dtx" style="left:461.3px;top:298.9px">&gt;</span><span class="dtx" style="left:475.7px;top:298.9px;font-size:9.35px">IB 418084.0, ARRAY</span><span class="dtx" style="left:564.9px;top:298.9px;font-size:8.93px">[0..31] OF BYTE [32.0]</span>
<svg class="abs" style="left:386.5px;top:312.8px" width="14" height="14" viewBox="0 0 14 14"><rect x="4.6" y="2" width="8.6" height="7.6" fill="#FFE628" stroke="#C8A800" stroke-width="0.7"/><path d="M2.2 3.2 H7 V1.2 L10.6 4.6 L7 8 V6 H2.2 Z" fill="#E83820"/><text x="2.4" y="13" font-family="Liberation Sans" font-size="5" fill="#555">R</text></svg><span class="dtx" style="left:407px;top:312.8px">.inputaddr2</span><span class="dtx" style="left:461.3px;top:312.8px">&gt;</span><span class="dtx" style="left:475.7px;top:312.8px;font-size:9.35px">IB 418148.0, ARRAY</span><span class="dtx" style="left:564.9px;top:312.8px;font-size:8.93px">[0..31] OF BYTE [32.0]</span>
<svg class="abs" style="left:386.5px;top:326.7px" width="14" height="14" viewBox="0 0 14 14"><rect x="4.6" y="2" width="8.6" height="7.6" fill="#FFE628" stroke="#C8A800" stroke-width="0.7"/><path d="M2.2 3.2 H7 V1.2 L10.6 4.6 L7 8 V6 H2.2 Z" fill="#E83820"/><text x="2.4" y="13" font-family="Liberation Sans" font-size="5" fill="#555">R</text></svg><span class="dtx" style="left:407px;top:326.7px">.inputaddr3</span><span class="dtx" style="left:461.3px;top:326.7px">&gt;</span><span class="dtx" style="left:475.7px;top:326.7px;font-size:9.35px">IB 418212.0, ARRAY</span><span class="dtx" style="left:564.9px;top:326.7px;font-size:8.93px">[0..31] OF BYTE [32.0]</span>

<div class="grp" style="left:678.5px;top:224.6px;width:127.0px;height:136.4px"></div><span class="gl" style="left:682.5px;top:218.7px">Show Variables</span>
<div class="grp" style="left:678.5px;top:370.8px;width:127.0px;height:73.5px"></div><span class="gl" style="left:682.5px;top:364.9px">Show Variable Types</span>
<div class="grp" style="left:678.5px;top:454.2px;width:127.0px;height:56.19999999999999px"></div><span class="gl" style="left:682.5px;top:448.3px">Offsets</span>
<div class="grp" style="left:678.5px;top:520.6px;width:127.0px;height:41.39999999999998px"></div><span class="gl" style="left:682.5px;top:514.7px">Variable Name / Comment</span>

<span class="cb on" style="left:687px;top:234.2px"><svg width="12" height="12" viewBox="0 0 12 12"><path d="M3 6.2 L5.2 8.3 L9.2 3.9" fill="none" stroke="#fff" stroke-width="0.95"/></svg></span><span class="dl" style="left:700.8px;top:234.1px">Only Unused</span>
<span class="cb" style="left:687px;top:248.1px"></span><span class="dl" style="left:700.8px;top:248.0px">Exclude disabled</span>
<span class="cb on" style="left:687px;top:264.4px"><svg width="12" height="12" viewBox="0 0 12 12"><path d="M3 6.2 L5.2 8.3 L9.2 3.9" fill="none" stroke="#fff" stroke-width="0.95"/></svg></span><span class="dl" style="left:700.8px;top:264.3px">Exclude other Devices</span>
<span class="cb on" style="left:687px;top:280.2px"><svg width="12" height="12" viewBox="0 0 12 12"><path d="M3 6.2 L5.2 8.3 L9.2 3.9" fill="none" stroke="#fff" stroke-width="0.95"/></svg></span><span class="dl" style="left:700.8px;top:280.1px">Exclude same Image</span>
<span class="cb on" style="left:687px;top:296.2px"><svg width="12" height="12" viewBox="0 0 12 12"><path d="M3.6 6 H8.4" fill="none" stroke="#fff" stroke-width="1.2"/></svg></span><span class="dl" style="left:700.8px;top:296.1px">Show Tooltips</span>
<span class="cb" style="left:687px;top:311.8px"></span><span class="dl" style="left:700.8px;top:311.7px">Sort by Address</span>
<span class="cb" style="left:687px;top:327.5px"></span><span class="dl" style="left:700.8px;top:327.4px">Show Variable Groups</span>
<span class="cb on" style="left:687px;top:343.3px"><svg width="12" height="12" viewBox="0 0 12 12"><path d="M3.6 6 H8.4" fill="none" stroke="#fff" stroke-width="1.2"/></svg></span><span class="dl" style="left:700.8px;top:343.2px">Collapse last Level</span>
<span class="cb" style="left:687px;top:379.5px"></span><span class="dl" style="left:700.8px;top:379.4px">Matching Type</span>
<span class="cb on" style="left:687px;top:394.6px"><svg width="12" height="12" viewBox="0 0 12 12"><path d="M3 6.2 L5.2 8.3 L9.2 3.9" fill="none" stroke="#fff" stroke-width="0.95"/></svg></span><span class="dl" style="left:700.8px;top:394.5px"><u>M</u>atching Size</span>
<span class="cb" style="left:687px;top:411.2px"></span><span class="dl" style="left:700.8px;top:411.1px"><u>A</u>ll Types</span>
<span class="cb" style="left:687px;top:426.3px"></span><span class="dl" style="left:700.8px;top:426.2px">Array Mode</span>
<span class="cb on" style="left:687px;top:462.9px"><svg width="12" height="12" viewBox="0 0 12 12"><path d="M3 6.2 L5.2 8.3 L9.2 3.9" fill="none" stroke="#fff" stroke-width="0.95"/></svg></span><span class="dl" style="left:700.8px;top:462.8px"><u>C</u>ontinuous</span>
<span class="cb on" style="left:702px;top:477.2px"><svg width="12" height="12" viewBox="0 0 12 12"><path d="M3 6.2 L5.2 8.3 L9.2 3.9" fill="none" stroke="#fff" stroke-width="0.95"/></svg></span><span class="dl" style="left:715.5px;top:477.1px">Ignore Gaps</span>
<span class="cb" style="left:687px;top:492.3px"></span><span class="dl" style="left:700.8px;top:492.2px">Show Dialog</span>
<span class="cb dis" style="left:687px;top:528.9px"></span><span class="dl gray" style="left:702px;top:528.8px">/</span><span class="cb dis" style="left:709px;top:528.9px"></span><span class="dl gray" style="left:723.4px;top:528.8px">Hand over</span>
<span class="cb dis" style="left:687px;top:544px"></span><span class="dl gray" style="left:702px;top:543.9px">/</span><span class="cb dis" style="left:709px;top:544px"></span><span class="dl gray" style="left:723.4px;top:543.9px">Take over</span>

  <div class="btn" style="left:679px;top:569px;width:57.5px">Cancel</div>
  <div class="btn" style="left:748px;top:569px;width:60px;border:1.2px solid #2A6FD0;line-height:17.8px">OK</div>
  <svg class="abs" style="left:808px;top:589px" width="8" height="8" viewBox="0 0 8 8"><g fill="#B8B8B8"><rect x="5.5" y="1" width="1.3" height="1.3"/><rect x="3.2" y="3.2" width="1.3" height="1.3"/><rect x="5.5" y="3.2" width="1.3" height="1.3"/><rect x="1" y="5.5" width="1.3" height="1.3"/><rect x="3.2" y="5.5" width="1.3" height="1.3"/><rect x="5.5" y="5.5" width="1.3" height="1.3"/></g></svg>
 </div>
</div>

<svg class="abs" style="left:0;top:0" width="1080" height="689" viewBox="0 0 1080 689"><defs><linearGradient id="tg" x1="0" y1="0" x2="1" y2="0"><stop offset="0" stop-color="#2F8F6E"/><stop offset="1" stop-color="#2E7C98"/></linearGradient><linearGradient id="eg" x1="0" y1="0" x2="0" y2="1"><stop offset="0" stop-color="#fff"/><stop offset="0.5" stop-color="#FAFAFA"/><stop offset="1" stop-color="#DDD"/></linearGradient></defs>
  <g fill="none" stroke="#FA4F52" stroke-width="3.3">
    <rect x="102.9" y="154.6" width="138.8" height="502.4"/>
    <rect x="402.2" y="281.5" width="262" height="17.6"/>
    <rect x="745.6" y="565" width="65.4" height="23.6"/>
  </g>
  <g fill="#FA4F52">
    <path d="M225.6 423.8 L226.6 425 L373.5 308.3 L375.2 312.6 L387.4 291.3 L364.4 299.2 L368.3 302.6 Z"/>
    <path d="M664.4 306.3 L665.6 305.7 L779.1 550.3 L783.5 548.3 L784 570 L768.1 555.2 L772.5 553.3 Z"/>
  </g>
</svg>
</body></html>
